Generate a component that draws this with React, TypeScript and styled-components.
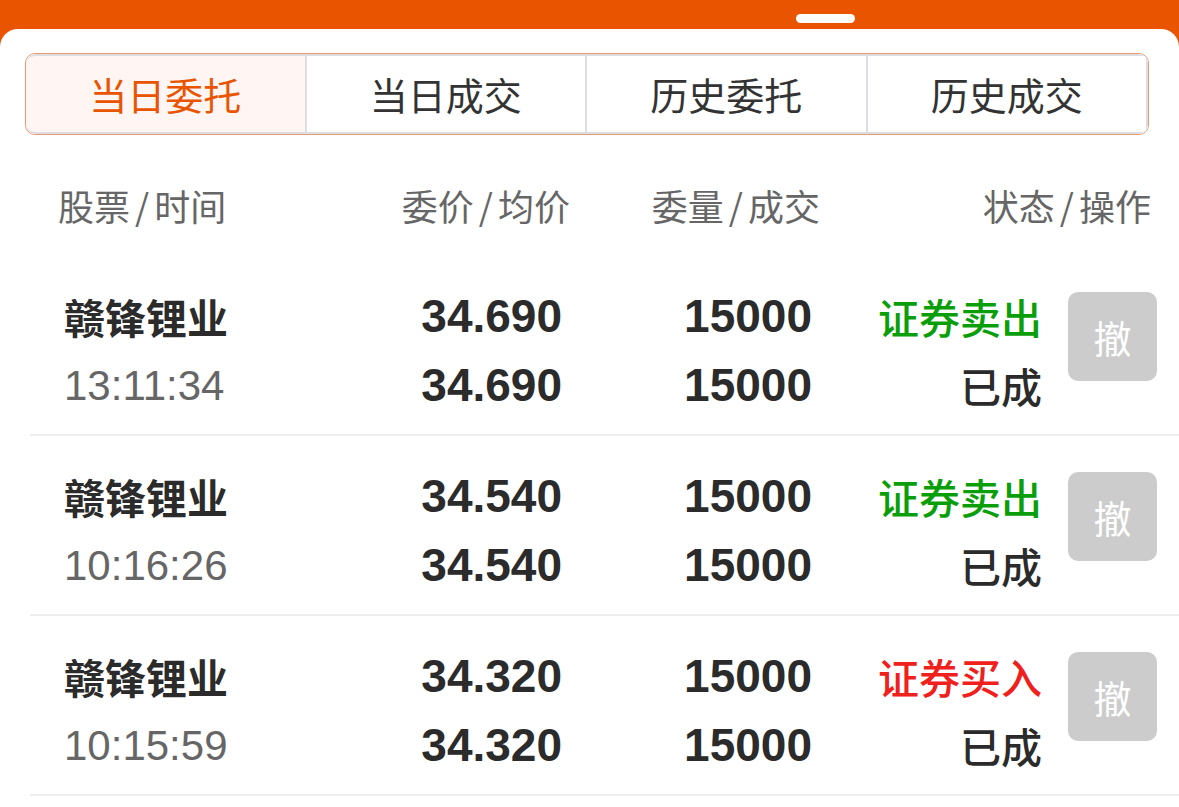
import React from "react";
import styled, { createGlobalStyle } from "styled-components";

const GlobalStyle = createGlobalStyle`
  html, body {
    margin: 0;
    padding: 0;
    background: #e85400;
  }
  body {
    font-family: "Liberation Sans", "Noto Sans CJK SC", sans-serif;
    color: #2b2b2b;
  }
`;

const TopBar = styled.div`
  height: 29px;
  background: #e85400;
  display: flex;
  justify-content: flex-end;
  padding-right: 324px;
  padding-top: 14px;
  box-sizing: border-box;
`;

const Handle = styled.div`
  width: 59px;
  height: 9px;
  border-radius: 5px;
  background: #fff;
`;

const Card = styled.div`
  background: #fff;
  border-radius: 18px 18px 0 0;
  padding-top: 24px;
  min-height: 778px;
  box-sizing: border-box;
`;

const Tabs = styled.div`
  margin: 0 30px 0 25px;
  height: 82px;
  display: flex;
  border: 1px solid #ec9a72;
  border-radius: 10px;
  overflow: hidden;
  box-sizing: border-box;
`;

const Tab = styled.div<{ $active?: boolean }>`
  flex: 1;
  display: flex;
  align-items: center;
  justify-content: center;
  padding-bottom: 2px;
  font-family: "Noto Sans CJK SC", sans-serif;
  font-size: 38px;
  color: ${(p) => (p.$active ? "#e85400" : "#333")};
  background: ${(p) => (p.$active ? "#fff5f2" : "#fff")};
  border-top: 2px solid #dcdee3;
  border-bottom: 2px solid #dcdee3;
  border-right: 2px solid #dcdee3;
  ${(p) => (p.$active ? "border-top-left-radius: 10px; border-bottom-left-radius: 10px;" : "")}
`;

const Header = styled.div`
  display: grid;
  grid-template-columns: 1fr 200px 250px 331px;
  padding: 47px 28px 28px 58px;
  font-family: "Noto Sans CJK SC", sans-serif;
  font-size: 36px;
  line-height: 46px;
  color: #666;
`;

const HeadCell = styled.div<{ $right?: boolean }>`
  text-align: ${(p) => (p.$right ? "right" : "left")};
  white-space: nowrap;
`;

const Slash = styled.span`
  margin: 0 5px;
`;

const Row = styled.div`
  margin-left: 30px;
  padding: 26px 22px 16px 34px;
  display: grid;
  grid-template-columns: 1fr 200px 250px 231px 116px;
  border-bottom: 2px solid #eeeeee;
  height: 180px;
  box-sizing: border-box;
`;

const Col = styled.div<{ $right?: boolean; $nudge?: number }>`
  display: flex;
  flex-direction: column;
  align-items: ${(p) => (p.$right ? "flex-end" : "flex-start")};
  margin-right: ${(p) => -(p.$nudge ?? 0)}px;
`;

const Line = styled.div<{ $color?: string; $weight?: number; $size?: number; $cjk?: boolean }>`
  height: 69px;
  line-height: 69px;
  white-space: nowrap;
  font-size: ${(p) => p.$size ?? 46}px;
  font-weight: ${(p) => p.$weight ?? 400};
  color: ${(p) => p.$color ?? "#2b2b2b"};
  font-family: ${(p) =>
    p.$cjk ? '"Noto Sans CJK SC", sans-serif' : '"Liberation Sans", "Noto Sans CJK SC", sans-serif'};
`;

const CancelButton = styled.div`
  justify-self: end;
  margin-top: 10px;
  width: 89px;
  height: 89px;
  border-radius: 10px;
  background: #cccccc;
  color: #fff;
  font-family: "Noto Sans CJK SC", sans-serif;
  font-size: 38px;
  display: flex;
  align-items: center;
  justify-content: center;
`;

type Order = {
  name: string;
  time: string;
  price: string;
  qty: string;
  side: "sell" | "buy";
};

const orders: Order[] = [
  { name: "赣锋锂业", time: "13:11:34", price: "34.690", qty: "15000", side: "sell" },
  { name: "赣锋锂业", time: "10:16:26", price: "34.540", qty: "15000", side: "sell" },
  { name: "赣锋锂业", time: "10:15:59", price: "34.320", qty: "15000", side: "buy" },
];

const tabs = ["当日委托", "当日成交", "历史委托", "历史成交"];

const headers = [
  ["股票", "时间"],
  ["委价", "均价"],
  ["委量", "成交"],
  ["状态", "操作"],
];

export default function App() {
  return (
    <>
      <GlobalStyle />
      <TopBar>
        <Handle />
      </TopBar>
      <Card>
        <Tabs>
          {tabs.map((t, i) => (
            <Tab key={t} $active={i === 0}>
              {t}
            </Tab>
          ))}
        </Tabs>
        <Header>
          {headers.map(([a, b], i) => (
            <HeadCell key={a} $right={i > 0}>
              {a}
              <Slash>/</Slash>
              {b}
            </HeadCell>
          ))}
        </Header>
        {orders.map((o, i) => (
          <Row key={i}>
            <Col>
              <Line $weight={700} $cjk $size={41}>{o.name}</Line>
              <Line $color="#666" $size={42}>{o.time}</Line>
            </Col>
            <Col $right $nudge={2}>
              <Line $weight={700}>{o.price}</Line>
              <Line $weight={700}>{o.price}</Line>
            </Col>
            <Col $right $nudge={2}>
              <Line $weight={700}>{o.qty}</Line>
              <Line $weight={700}>{o.qty}</Line>
            </Col>
            <Col $right $nudge={1}>
              <Line $cjk $size={41} $weight={500} $color={o.side === "sell" ? "#0a9e0a" : "#f0201c"}>
                {o.side === "sell" ? "证券卖出" : "证券买入"}
              </Line>
              <Line $cjk $size={41} $weight={500}>已成</Line>
            </Col>
            <CancelButton>撤</CancelButton>
          </Row>
        ))}
      </Card>
    </>
  );
}
